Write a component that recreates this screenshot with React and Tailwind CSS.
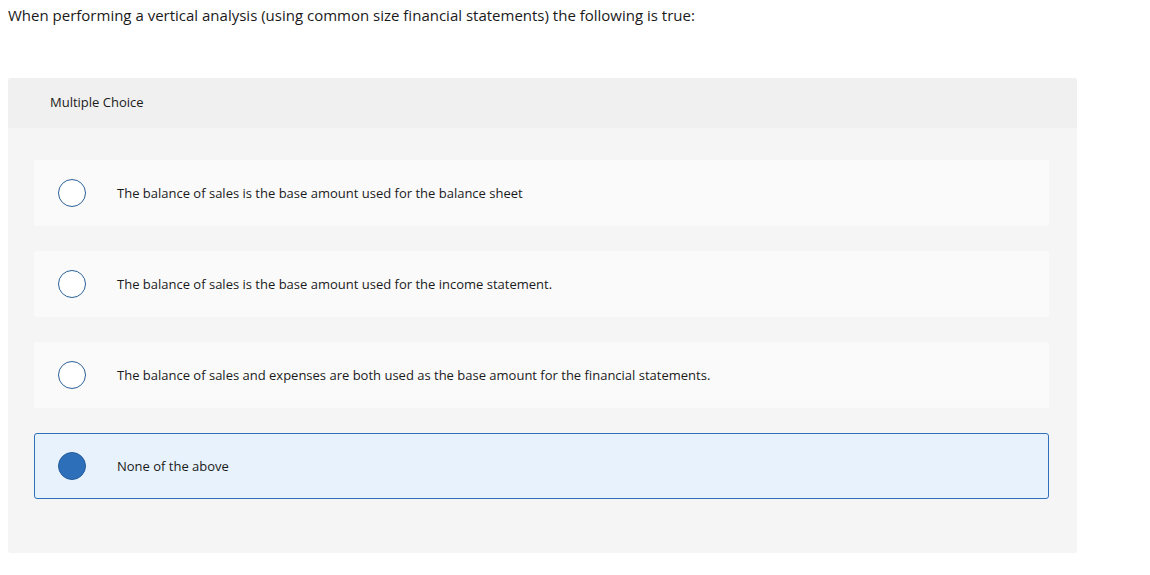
export default function App() {
  const opts = [
    "The balance of sales is the base amount used for the balance sheet",
    "The balance of sales is the base amount used for the income statement.",
    "The balance of sales and expenses are both used as the base amount for the financial statements.",
    "None of the above",
  ];
  return (
    <div className="bg-white w-[1150px] h-[575px] text-[#1a1a1a]" style={{ fontFamily: "'Open Sans', 'Noto Sans', sans-serif" }}>
      <div className="pl-2 pt-[5px] text-[15px] leading-[20px]">
        When performing a vertical analysis (using common size financial statements) the following is true:
      </div>
      <div className="ml-2 mt-[53px] w-[1069px] rounded-[3px] bg-[#f5f5f5] overflow-hidden">
        <div className="h-[50px] bg-[#f0f0f0] flex items-center pl-[42px] text-[13px]">Multiple Choice</div>
        <div className="pt-[32px] pb-[54px] pl-[26px] flex flex-col gap-[25px]">
          {opts.map((t, i) => {
            const sel = i === 3;
            return (
              <div
                key={i}
                className={
                  sel
                    ? "w-[1015px] h-[66px] rounded-[3px] bg-[#e8f2fc] border border-[#2f70bb] flex items-center"
                    : "w-[1015px] h-[66px] rounded-[3px] bg-[#fafafa] border border-transparent flex items-center"
                }
              >
                <div
                  className={
                    sel
                      ? "ml-[23px] w-[28px] h-[28px] rounded-full bg-[#2e6fba] border border-[#245c9c]"
                      : "ml-[23px] w-[28px] h-[28px] rounded-full bg-white border-[1.5px] border-[#2a6096]"
                  }
                />
                <div className="ml-[31px] text-[13px] pt-[1px]">{t}</div>
              </div>
            );
          })}
        </div>
      </div>
    </div>
  );
}
